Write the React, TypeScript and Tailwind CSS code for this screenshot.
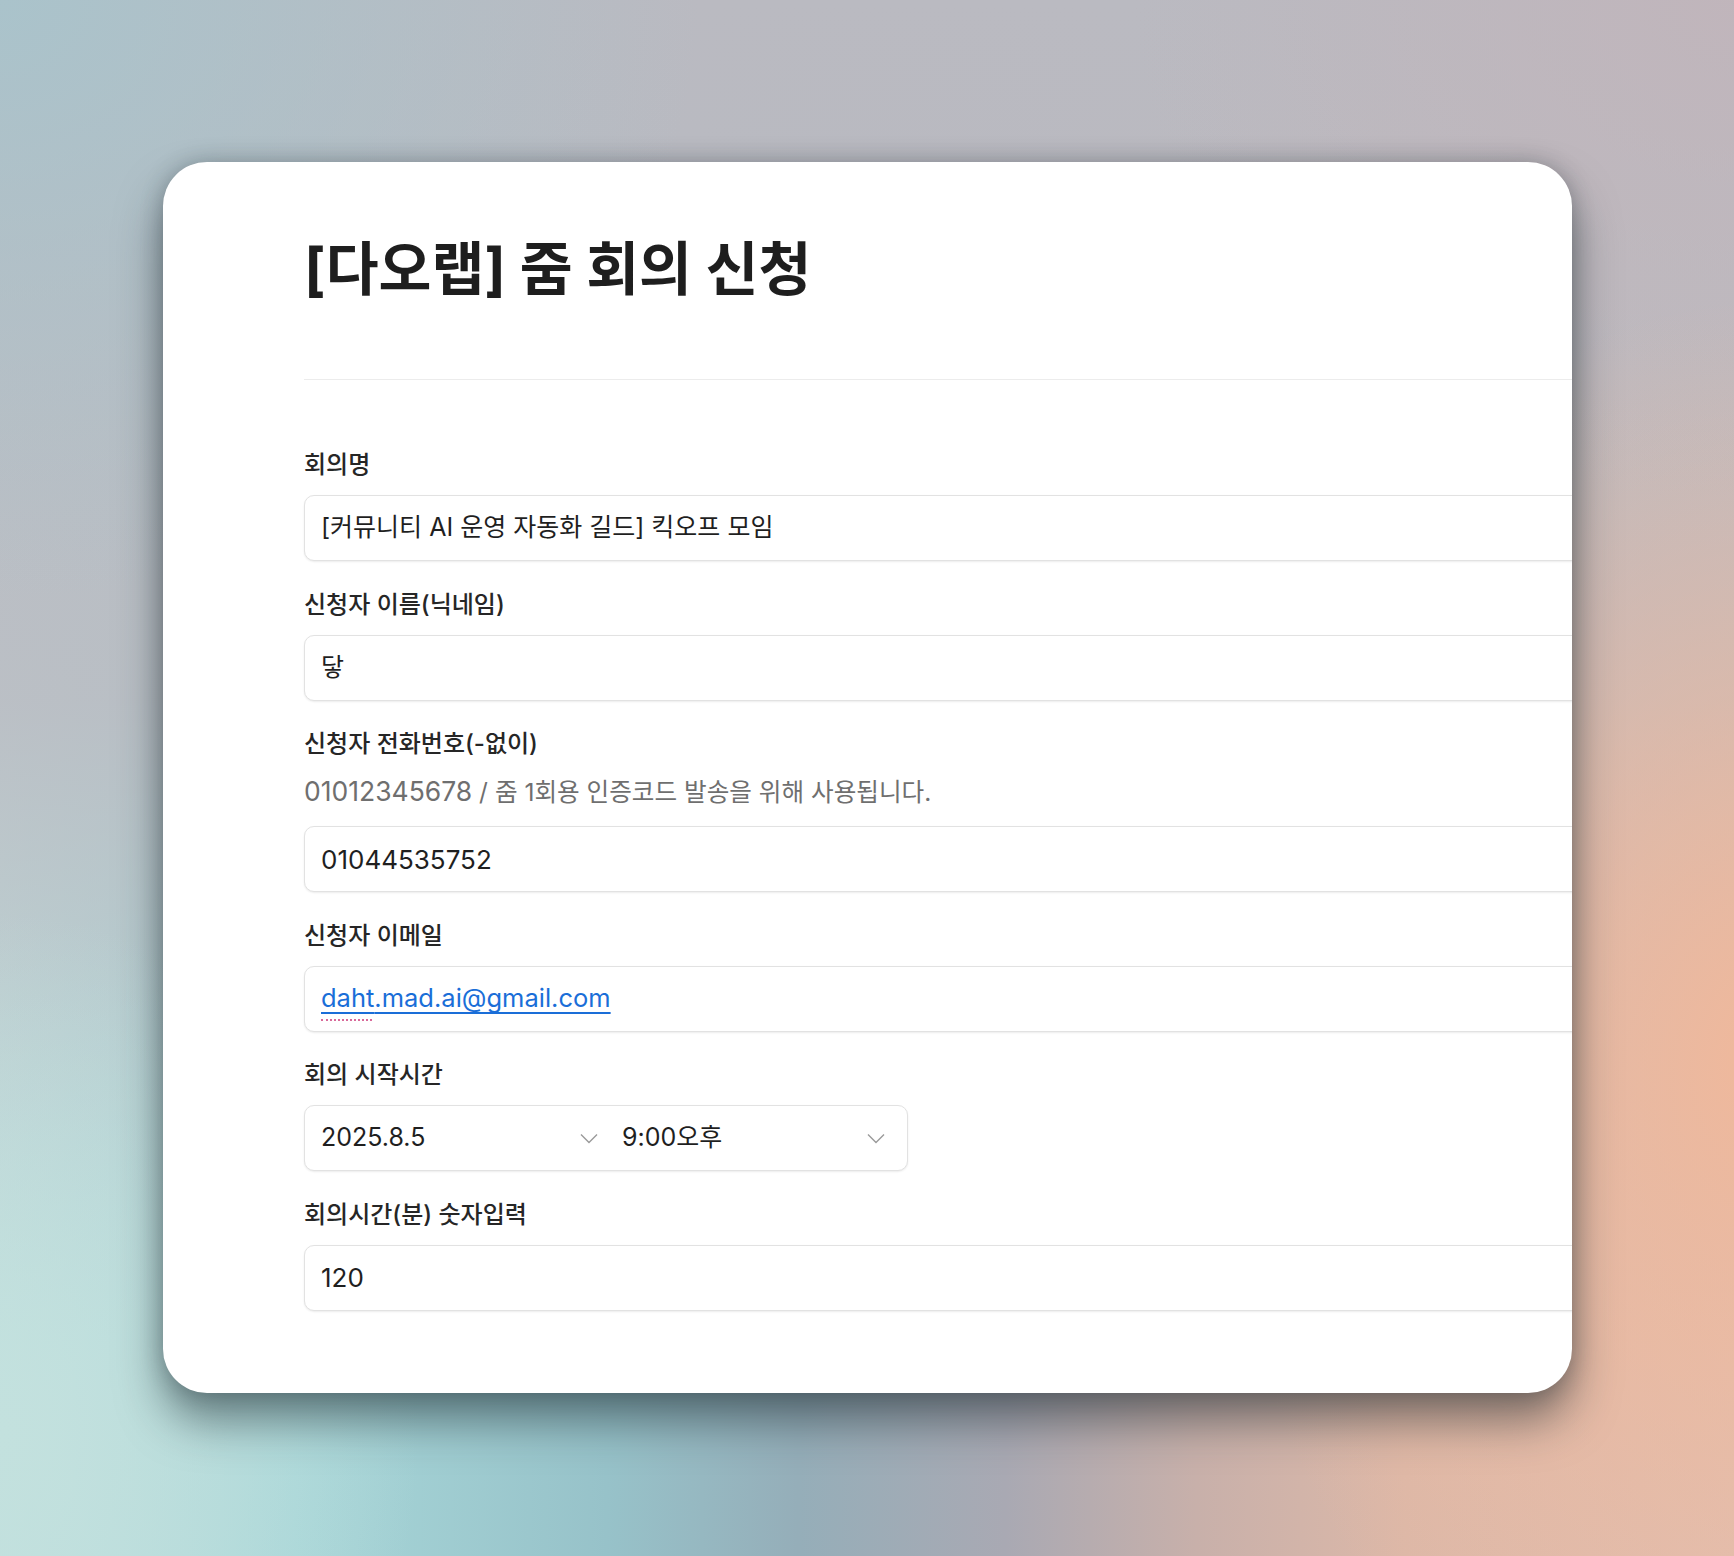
import React from "react";

const Chevron = () => (
  <svg width="18" height="11" viewBox="0 0 18 11" fill="none" className="shrink-0">
    <polyline points="1,1.5 9,9.5 17,1.5" stroke="#9a9a9a" strokeWidth="1.4" fill="none" />
  </svg>
);

const Label = ({ children }: { children: React.ReactNode }) => (
  <div className="text-[24px] leading-[34px] font-medium text-[#262626] mb-[13px]">{children}</div>
);

const Input = ({ children }: { children: React.ReactNode }) => (
  <div className="h-[66px] w-full rounded-[10px] border border-[#e2e2e2] bg-white shadow-[0_1px_2px_rgba(0,0,0,0.08)] flex items-center pl-4 text-[25px] text-[#1f1f1f]">
    {children}
  </div>
);

export default function App() {
  return (
    <div className="w-[1734px] h-[1556px] overflow-hidden pt-[162px] pl-[163px] font-['Inter','Noto_Sans_CJK_KR',sans-serif] bg-[radial-gradient(ellipse_560px_760px_at_102%_68%,#f0b89b_0%,rgba(240,184,155,0.6)_40%,rgba(240,184,155,0)_100%),radial-gradient(ellipse_420px_520px_at_0%_92%,#c3e1de_0%,rgba(195,225,222,0)_100%),radial-gradient(ellipse_700px_600px_at_0%_0%,rgba(168,196,204,0.9)_0%,rgba(168,196,204,0)_100%),radial-gradient(ellipse_600px_500px_at_100%_0%,rgba(194,180,186,0.8)_0%,rgba(194,180,186,0)_100%),linear-gradient(to_bottom,rgba(186,186,193,1)_0%,rgba(186,186,193,0.85)_45%,rgba(186,186,193,0)_86%),linear-gradient(to_right,#bfdedd_0%,#a7d6d8_17%,#97c2c9_35%,#95aeb9_46%,#a9a9b3_58%,#c8b0aa_69%,#dcb8a8_81%,#dfbfb2_100%)]">
      <div className="w-[1409px] h-[1231px] rounded-[44px] bg-white overflow-hidden shadow-[0_28px_45px_rgba(25,40,45,0.5),0_0_22px_rgba(30,40,45,0.28)]">
        <div className="pl-[141px] pt-[75px] w-[1560px]">
          <h1 className="text-[57.5px] leading-[64px] font-bold text-[#1e1e1e]">[다오랩] 줌 회의 신청</h1>
          <div className="mt-[78px] border-t border-[#ececec]" />
          <div className="pt-[68px] flex flex-col gap-[26.5px]">
            <div>
              <Label>회의명</Label>
              <Input>[커뮤니티 AI 운영 자동화 길드] 킥오프 모임</Input>
            </div>
            <div>
              <Label>신청자 이름(닉네임)</Label>
              <Input>닿</Input>
            </div>
            <div>
              <Label>신청자 전화번호(-없이)</Label>
              <div className="text-[24.6px] leading-[34px] text-[#6f6f6f] mt-[9px] mb-[17px]">
                <span className="text-[26.5px]">01012345678</span> / 줌 1회용 인증코드 발송을 위해 사용됩니다.
              </div>
              <Input>
                <span className="text-[26px]">01044535752</span>
              </Input>
            </div>
            <div>
              <Label>신청자 이메일</Label>
              <Input>
                <span className="text-[25.5px] text-[#1a6ed8] underline underline-offset-[5px] decoration-[1.5px]">
                  <span className="relative">
                    daht
                    <span className="absolute left-0 right-[2px] bottom-[-8px] border-b-2 border-dotted border-[#d96a9a]" />
                  </span>
                  .mad.ai@gmail.com
                </span>
              </Input>
            </div>
            <div>
              <Label>회의 시작시간</Label>
              <div className="h-[66px] w-[604px] rounded-[10px] border border-[#e2e2e2] bg-white shadow-[0_1px_2px_rgba(0,0,0,0.08)] flex items-center text-[25px] text-[#1f1f1f]">
                <div className="w-[301px] flex items-center justify-between pl-4 pr-[8px]">
                  <span>2025.8.5</span>
                  <Chevron />
                </div>
                <div className="flex-1 flex items-center justify-between pl-4 pr-[22px]">
                  <span>9:00오후</span>
                  <Chevron />
                </div>
              </div>
            </div>
            <div>
              <Label>회의시간(분) 숫자입력</Label>
              <Input>
                <span className="text-[26px]">120</span>
              </Input>
            </div>
          </div>
        </div>
      </div>
    </div>
  );
}
